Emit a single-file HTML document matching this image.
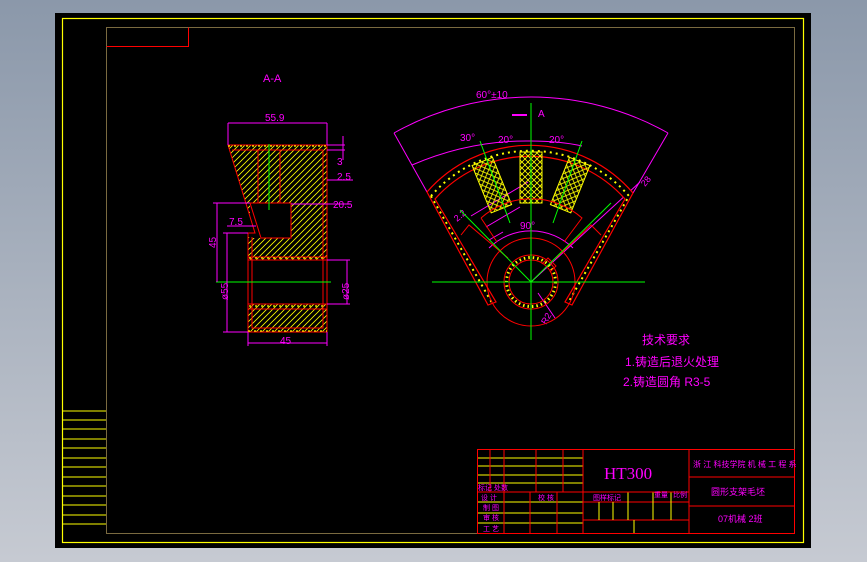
<!DOCTYPE html>
<html><head><meta charset="utf-8"><style>
html,body{margin:0;padding:0;width:867px;height:562px;overflow:hidden;background:linear-gradient(#8b98aa,#c6cad2);}
svg{position:absolute;left:0;top:0;}
text{font-family:"Liberation Sans","Noto Sans CJK SC",sans-serif;fill:#ff00ff;}
</style></head><body>
<svg width="867" height="562" viewBox="0 0 867 562">
<defs>
<pattern id="h1" width="6" height="6" patternUnits="userSpaceOnUse"><path d="M0 6L6 0M-1 1L1 -1M5 7L7 5" stroke="#ffff00" stroke-width="0.8"/></pattern>
<pattern id="h2" width="6" height="6" patternUnits="userSpaceOnUse"><path d="M0 6L6 0M0 0L6 6" stroke="#ffff00" stroke-width="0.8"/></pattern>
</defs>
<rect x="55" y="13" width="756" height="535" fill="#000"/>
<rect x="62.5" y="18.5" width="741" height="524" fill="none" stroke="#ffff00" stroke-width="1.2"/>
<rect x="106.5" y="27.5" width="688" height="506" fill="none" stroke="#7a6a40" stroke-width="1"/>
<path d="M106.5 46.5H188.5V27.5" fill="none" stroke="#ff0000"/>
<!-- left table -->
<g stroke="#ffff00" stroke-width="1">
<path d="M62 411H106M62 420H106M62 429H106M62 439H106M62 448H106M62 458H106M62 467H106M62 477H106M62 486H106M62 496H106M62 505H106M62 515H106M62 524H106"/>
</g>
<!-- Section A-A -->
<text x="263" y="82" font-size="11">A-A</text>
<g>
<polygon points="228,145 327,145 327,260 248,260 248,237 255,237 255,232" fill="url(#h1)"/>
<rect x="248" y="304" width="79" height="28" fill="url(#h1)"/>
<rect x="250" y="203" width="41" height="35" fill="#000"/>
<g fill="none" stroke="#ff0000" stroke-width="1">
<path d="M228 145H327V332H248V233H255L228 145"/>
<path d="M232 150H323M250 203H291V238H261L250 203M258 150V203M280 150V203"/>
<path d="M248 257H327M248 260H327M248 304H327M248 309H327M252 237V328H323V150"/>
</g>
<path d="M228 146H327M232 150V150M248 331H327M249 258H326M249 306H326" stroke="#ffff00" stroke-width="1.2" stroke-dasharray="2 4"/>
<path d="M269 144V210" stroke="#00ff00"/>
<path d="M216 282H331" stroke="#00ff00"/>
<g stroke="#ff00ff" fill="none" stroke-width="1">
<path d="M228 123H327M228 123V145M327 123V145"/>
<path d="M248 343H327M248 332V346M327 332V346"/>
<path d="M327 145H345M327 150H345M343 136V160M327 180H353M327 204H350M291 204H327"/>
<path d="M327 260H350M327 304H350M347 260V304"/>
<path d="M217 203V282M213 203H250M227 233V332M223 233H248M223 332H248M227 226H256"/>
</g>
<text x="265" y="121" font-size="10">55.9</text>
<text x="280" y="344" font-size="10">45</text>
<text x="337" y="165" font-size="10">3</text>
<text x="337" y="180" font-size="10">2.5</text>
<text x="333" y="208" font-size="10">20.5</text>
<text x="229" y="225" font-size="10">7.5</text>
<text x="216" y="248" font-size="10" transform="rotate(-90 216 248)">45</text>
<text x="228" y="300" font-size="10" transform="rotate(-90 228 300)">ø55</text>
<text x="349" y="300" font-size="10" transform="rotate(-90 349 300)">ø25</text>
</g>
<!-- gear view -->
<g>
<path d="M394 133L427 192M668 133L633 193" stroke="#ff00ff" fill="none"/>
<path d="M394 133A279 279 0 0 1 668 133" stroke="#ff00ff" fill="none"/>
<path d="M412 165Q470 140 531 141Q560 141 582 146" stroke="#ff00ff" fill="none"/>
<path d="M512 115H527" stroke="#ff00ff" stroke-width="2"/>
<text x="476" y="98" font-size="10">60°±10</text>
<text x="538" y="117" font-size="10">A</text>
<text x="460" y="141" font-size="10">30°</text>
<text x="498" y="143" font-size="10">20°</text>
<text x="549" y="143" font-size="10">20°</text>
<text x="645" y="187" font-size="9" transform="rotate(-50 645 187)">28</text>
<text x="457" y="222" font-size="9" transform="rotate(-40 457 222)">2.2</text>
<text x="520" y="229" font-size="10">90°</text>
<text x="546" y="325" font-size="9" transform="rotate(-60 546 325)">R2</text>
<path d="M471 216L528 182M489 240L503 232M486 227L520 207" stroke="#ff00ff" fill="none"/>
<path d="M489 248A60 60 0 0 1 573 248" stroke="#ff00ff" fill="none"/>
<path d="M531 282L640 182" stroke="#ff00ff" fill="none"/>
<path d="M538 293L555 318" stroke="#ff00ff" fill="none"/>
<!-- rim -->
<path d="M427 192A136 136 0 0 1 633 193L572 305L565 302L625 199A127 127 0 0 0 435 199L496 302L488 305Z" fill="#000" stroke="#ff0000" stroke-width="1.2"/>
<path d="M431 196A131 131 0 0 1 629 196L568 303M431 196L492 303" fill="none" stroke="#ffff00" stroke-width="2" stroke-dasharray="2 4"/>
<!-- spokes -->
<g stroke="#ffff00" stroke-width="1">
<rect x="520" y="152" width="22" height="51" fill="url(#h2)"/>
<rect x="520" y="152" width="22" height="51" fill="url(#h2)" transform="rotate(-22 531 282)"/>
<rect x="520" y="152" width="22" height="51" fill="url(#h2)" transform="rotate(22 531 282)"/>
</g>
<!-- hub -->
<g fill="none" stroke="#ff0000" stroke-width="1">
<path d="M481 218A76 76 0 0 1 582 218L564 242M481 218L497 242"/>
<path d="M461 235L469 225L508 258M601 235L591 225L556 258"/>
<circle cx="531" cy="282" r="44"/>
<circle cx="531" cy="282" r="27"/>
<circle cx="531" cy="282" r="22"/>
</g>
<circle cx="531" cy="282" r="24.5" fill="none" stroke="#ffff00" stroke-width="3" stroke-dasharray="1.5 3"/>
<path d="M542 264L548 258L556 266L550 272" fill="none" stroke="#ff0000"/>
<g stroke="#00ff00" stroke-width="1" fill="none">
<path d="M531 103V340M432 282H645M531 282L460 210M531 282L611 203M480 141L510 223M582 141L553 223"/>
</g>
</g>
<!-- tech req -->
<text x="642" y="344" font-size="12">技术要求</text>
<text x="625" y="366" font-size="12">1.铸造后退火处理</text>
<text x="623" y="386" font-size="12">2.铸造圆角 R3-5</text>
<!-- title block -->
<g stroke="#ffff00" stroke-width="1">
<path d="M477 458H583M477 466H583M477 475H583M477 483H583M477 502H583M477 513H583M477 523H583"/>
<path d="M583 502H689M583 520H689" stroke="#ff0000"/>
<path d="M599 502V520M613 502V520M628 492V520M653 492V520M671 492V520M634 520V534"/>
</g>
<g stroke="#ff0000" stroke-width="1" fill="none">
<rect x="477.5" y="449.5" width="317" height="84"/>
<path d="M583 449V534M689 449V534M689 477H795M689 506H795M583 492H689M477 492H583"/>
<path d="M490 449V492M504 449V534M536 449V492M563 449V492M530 492V534M557 492V534"/>
</g>
<text x="604" y="479" font-size="17" font-family="Liberation Serif" style="font-family:'Liberation Serif',serif">HT300</text>
<text x="693" y="467" font-size="8">浙 江 科技学院 机 械 工 程 系</text>
<text x="711" y="495" font-size="9">圆形支架毛坯</text>
<text x="718" y="522" font-size="9">07机械 2班</text>
<text x="593" y="500" font-size="7">图样标记</text>
<text x="654" y="497" font-size="7">重量</text>
<text x="673" y="497" font-size="7">比例</text>
<text x="478" y="490" font-size="7">标记 处数</text>
<text x="481" y="500" font-size="7">设 计</text>
<text x="483" y="510" font-size="7">制 图</text>
<text x="483" y="520" font-size="7">审 核</text>
<text x="483" y="531" font-size="7">工 艺</text>
<text x="538" y="500" font-size="7">校 核</text>
</svg>
</body></html>
